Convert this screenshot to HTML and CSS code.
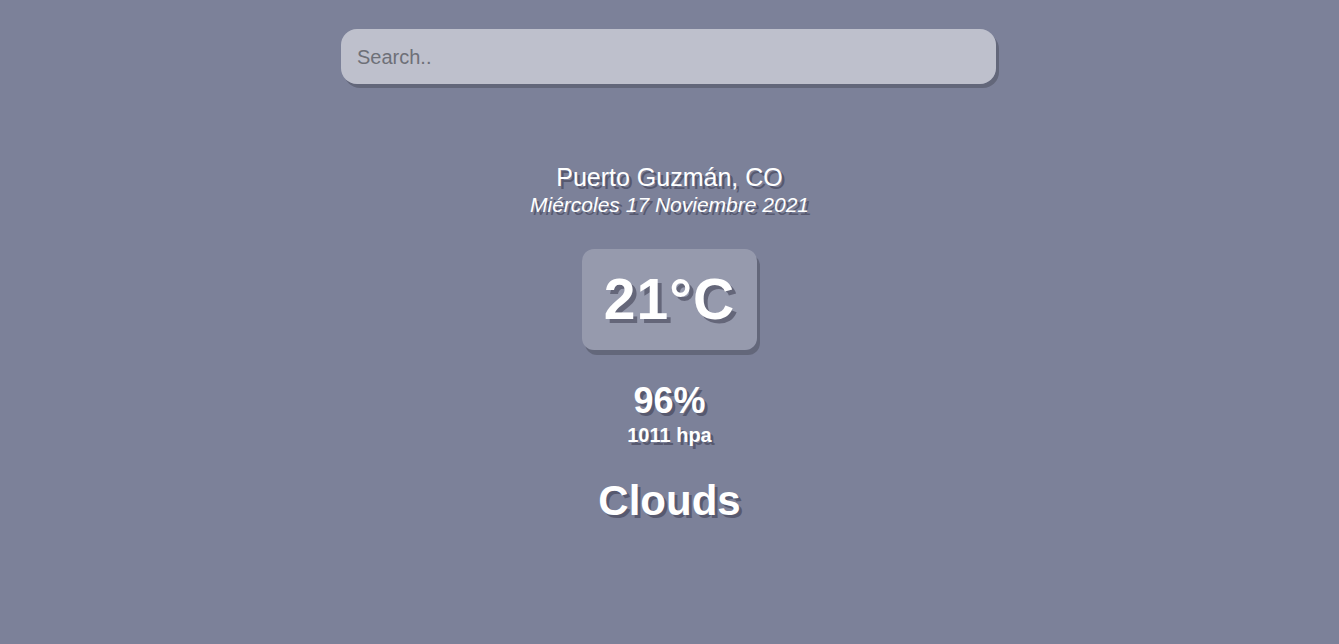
FILE: index.html
```html
<!DOCTYPE html>
<html lang="es">
<head>
<meta charset="utf-8">
<title>Weather</title>
<link rel="stylesheet" href="styles.css">
</head>
<body>
<main class="app">
  <div class="search-box">
    <input class="search-bar" type="text" placeholder="Search..">
  </div>
  <div class="location-box">
    <div class="location">Puerto Guzmán, CO</div>
    <div class="date">Miércoles 17 Noviembre 2021</div>
  </div>
  <div class="weather-box">
    <div class="temp">21°C</div>
    <div class="humidity">96%</div>
    <div class="pressure">1011 hpa</div>
    <div class="weather">Clouds</div>
  </div>
</main>
</body>
</html>
```
FILE: styles.css
```css
* { box-sizing: border-box; }
html, body { margin: 0; padding: 0; }
body {
  background: #7c8199;
  font-family: "Liberation Sans", Arial, sans-serif;
  min-height: 644px;
}
.app {
  display: flex;
  flex-direction: column;
  align-items: center;
  padding-top: 29px;
}
.search-box {
  width: 655px;
  margin-left: -2px;
}
.search-bar {
  display: block;
  width: 100%;
  height: 55px;
  padding: 2px 16px 0;
  border: none;
  outline: none;
  background: rgba(255,255,255,0.5);
  border-radius: 16px;
  box-shadow: 3px 4px rgba(0,0,0,0.2);
  font-family: "Liberation Sans", Arial, sans-serif;
  font-size: 20px;
  color: #313131;
}
.search-bar::placeholder { color: #6e7078; }
.location-box {
  margin-top: 79px;
  display: flex;
  flex-direction: column;
  align-items: center;
  color: #fff;
  text-shadow: 3px 3px rgba(50,50,70,0.5);
}
.location { font-size: 25px; line-height: 29px; }
.date { font-size: 21px; font-style: italic; line-height: 25px; }
.weather-box {
  display: flex;
  flex-direction: column;
  align-items: center;
  color: #fff;
  text-shadow: 3px 3px rgba(50,50,70,0.5);
}
.temp {
  margin-top: 32px;
  padding: 15px 22px;
  background: rgba(255,255,255,0.2);
  border-radius: 12px;
  box-shadow: 3px 5px rgba(0,0,0,0.2);
  font-size: 57px;
  font-weight: 700;
  letter-spacing: 1px;
  line-height: 71px;
  text-shadow: 4px 4px rgba(50,50,70,0.5);
}
.humidity { margin-top: 31px; font-size: 36px; font-weight: 700; line-height: 40px; }
.pressure { margin-top: 3px; font-size: 20px; font-weight: 700; line-height: 22px; }
.weather { margin-top: 31px; font-size: 42px; font-weight: 700; line-height: 48px; }
```
